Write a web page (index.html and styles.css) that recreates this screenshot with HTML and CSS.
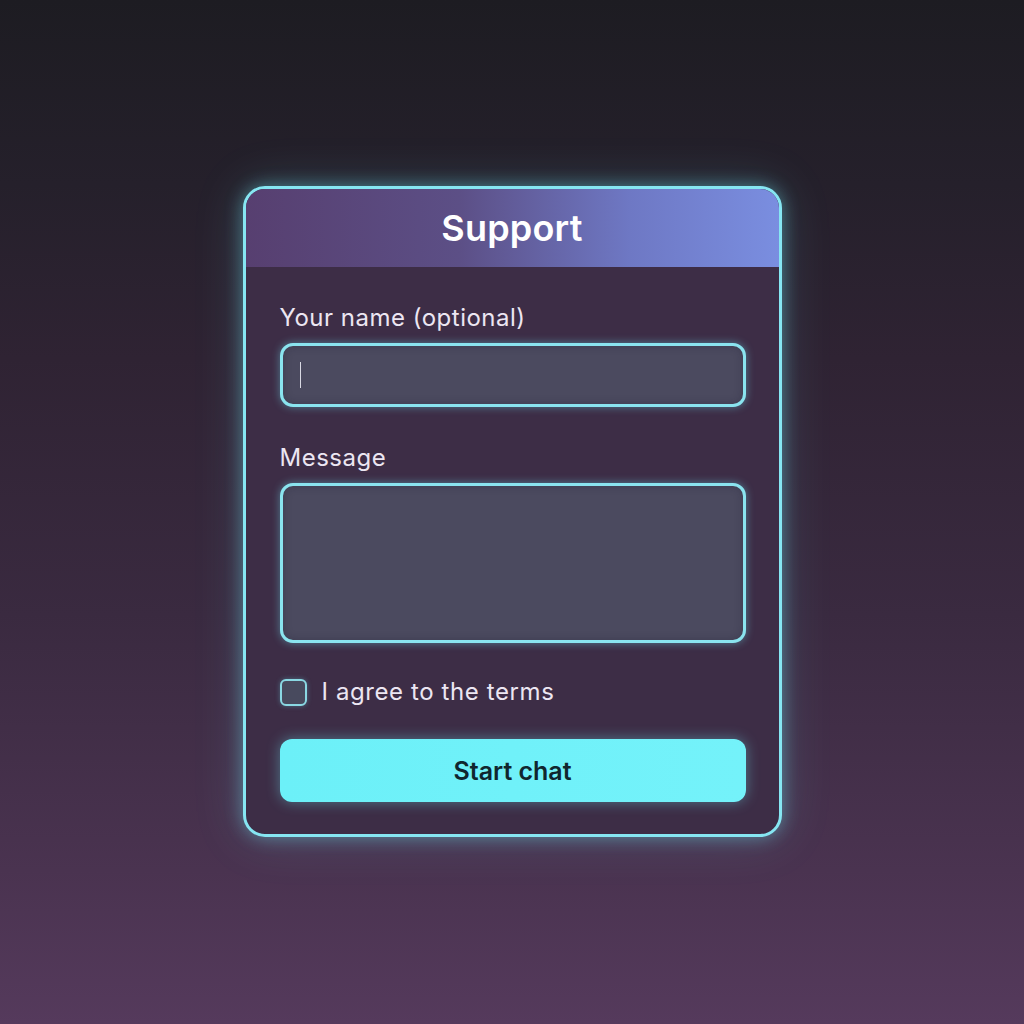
FILE: index.html
```html
<!DOCTYPE html>
<html lang="en">
<head>
<meta charset="utf-8">
<title>Support</title>
<link rel="stylesheet" href="styles.css">
</head>
<body>
<main class="stage">
  <section class="card">
    <header class="card-header">
      <h1 class="title">Support</h1>
    </header>
    <form class="card-body">
      <div class="field">
        <label class="label" for="name">Your name (optional)</label>
        <div class="input"><span class="caret"></span></div>
      </div>
      <div class="field">
        <label class="label" for="msg">Message</label>
        <div class="textarea"></div>
      </div>
      <div class="check-row">
        <span class="checkbox"></span>
        <span class="check-label">I agree to the terms</span>
      </div>
      <button type="button" class="btn">Start chat</button>
    </form>
  </section>
</main>
</body>
</html>
```

FILE: styles.css
```css
html, body {
  margin: 0;
  padding: 0;
}
body {
  width: 1024px;
  height: 1024px;
  background: linear-gradient(180deg, #1d1c22 0%, #25202b 18%, #2f2333 35%, #3a2a40 60%, #4a3350 85%, #553a5c 100%);
  font-family: Inter, "Noto Sans", sans-serif;
  color: #f2eef6;
  overflow: hidden;
}
.stage {
  display: flex;
  justify-content: center;
  padding-top: 186px;
}
.card {
  width: 533px;
  border: 3px solid #86e6f2;
  border-radius: 22px;
  background: #3d2d46;
  box-shadow: 0 0 18px rgba(110, 225, 240, 0.45), 0 0 50px rgba(110, 225, 240, 0.18);
  overflow: hidden;
}
.card-header {
  height: 78px;
  display: flex;
  align-items: center;
  justify-content: center;
  background: linear-gradient(90deg, #573f70 0%, #5c4f86 40%, #6e78c4 72%, #7a8ee0 100%);
}
.title {
  margin: 0;
  font-size: 36px;
  font-weight: 600;
  color: #ffffff;
  letter-spacing: 0.2px;
}
.card-body {
  display: flex;
  flex-direction: column;
  padding: 36px 33px 32px 34px;
  gap: 36px;
}
.field {
  display: flex;
  flex-direction: column;
  gap: 10px;
}
.label {
  font-size: 24px;
  line-height: 30px;
  color: #ece6f2;
  letter-spacing: 0.5px;
}
.input, .textarea {
  box-sizing: border-box;
  border: 3px solid #8ae4ef;
  border-radius: 13px;
  background: #4b4a5f;
  box-shadow: 0 0 8px rgba(110, 225, 240, 0.45), inset 0 0 8px rgba(20, 20, 40, 0.25);
}
.input {
  height: 64px;
  display: flex;
  align-items: center;
  padding-left: 17px;
}
.caret {
  width: 1.5px;
  height: 26px;
  background: #d9d9e3;
}
.textarea {
  height: 160px;
}
.check-row {
  display: flex;
  align-items: center;
  gap: 15px;
  height: 28px;
  margin-top: -1px;
}
.checkbox {
  box-sizing: border-box;
  width: 27px;
  height: 27px;
  border: 2.5px solid #8ad8e3;
  border-radius: 6px;
  background: #484a5e;
  box-shadow: 0 0 5px rgba(110, 225, 240, 0.35);
}
.check-label {
  font-size: 24px;
  line-height: 28px;
  color: #ece6f2;
  letter-spacing: 0.6px;
}
.btn {
  height: 63px;
  border: none;
  border-radius: 12px;
  background: linear-gradient(90deg, #6cf0f8 0%, #74f2fa 100%);
  box-shadow: 0 0 14px rgba(110, 235, 245, 0.4);
  font-family: Inter, "Noto Sans", sans-serif;
  font-size: 25px;
  font-weight: 600;
  color: #10262e;
  cursor: pointer;
  margin-top: -3px;
}
```
